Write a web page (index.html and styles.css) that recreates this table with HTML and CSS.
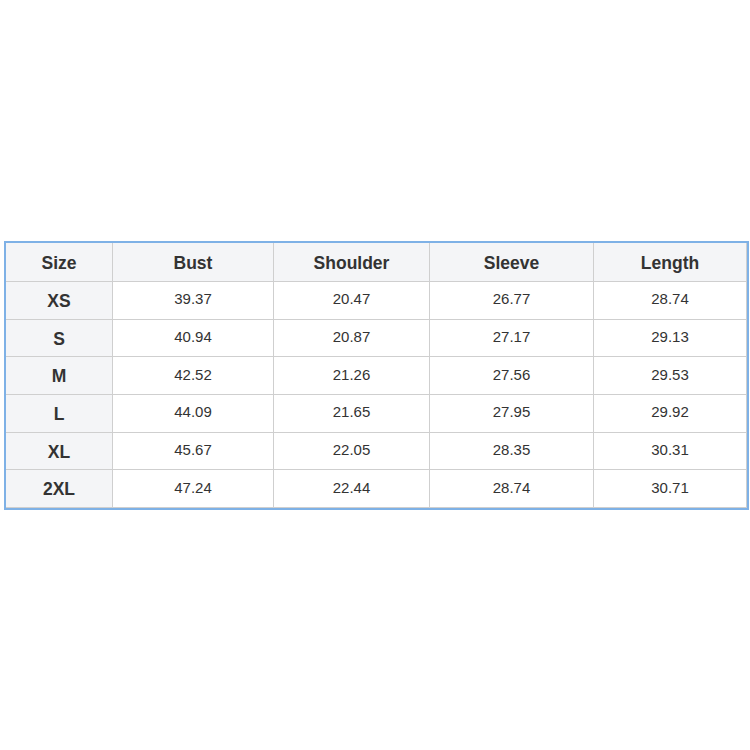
FILE: index.html
```html
<!DOCTYPE html>
<html>
<head>
<meta charset="utf-8">
<link rel="stylesheet" href="styles.css">
</head>
<body>
<div class="wrap">
<table class="size-table">
<colgroup>
<col class="c1"><col class="c2"><col class="c3"><col class="c4"><col class="c5">
</colgroup>
<thead>
<tr><th>Size</th><th>Bust</th><th>Shoulder</th><th>Sleeve</th><th>Length</th></tr>
</thead>
<tbody>
<tr><th>XS</th><td>39.37</td><td>20.47</td><td>26.77</td><td>28.74</td></tr>
<tr><th>S</th><td>40.94</td><td>20.87</td><td>27.17</td><td>29.13</td></tr>
<tr><th>M</th><td>42.52</td><td>21.26</td><td>27.56</td><td>29.53</td></tr>
<tr><th>L</th><td>44.09</td><td>21.65</td><td>27.95</td><td>29.92</td></tr>
<tr><th>XL</th><td>45.67</td><td>22.05</td><td>28.35</td><td>30.31</td></tr>
<tr><th>2XL</th><td>47.24</td><td>22.44</td><td>28.74</td><td>30.71</td></tr>
</tbody>
</table>
</div>
</body>
</html>
```
FILE: styles.css
```css
html, body {
  margin: 0;
  padding: 0;
  background: #ffffff;
}
.wrap {
  padding: 241px 1px 0 4px;
}
.size-table {
  width: 745px;
  border-collapse: separate;
  border-spacing: 0;
  border: 2px solid #7eb1e6;
  table-layout: fixed;
  font-family: "Liberation Sans", Arial, sans-serif;
  color: #333333;
}
.c1 { width: 107px; }
.c2 { width: 161px; }
.c3 { width: 156px; }
.c4 { width: 164px; }
.c5 { width: auto; }
.size-table th,
.size-table td {
  border-right: 1px solid #cfcfcf;
  border-bottom: 1px solid #cfcfcf;
  text-align: center;
  padding: 0;
}
.size-table thead tr {
  height: 39px;
}
.size-table thead th {
  background: #f4f5f7;
  font-size: 17.5px;
  font-weight: bold;
  padding-top: 2px;
}
.size-table tbody tr {
  height: 37.7px;
}
.size-table tbody th {
  background: #f4f5f7;
  font-size: 17.5px;
  font-weight: bold;
  padding-top: 2px;
}
.size-table tbody td {
  font-size: 15px;
  background: #ffffff;
  padding-bottom: 3px;
}
```
